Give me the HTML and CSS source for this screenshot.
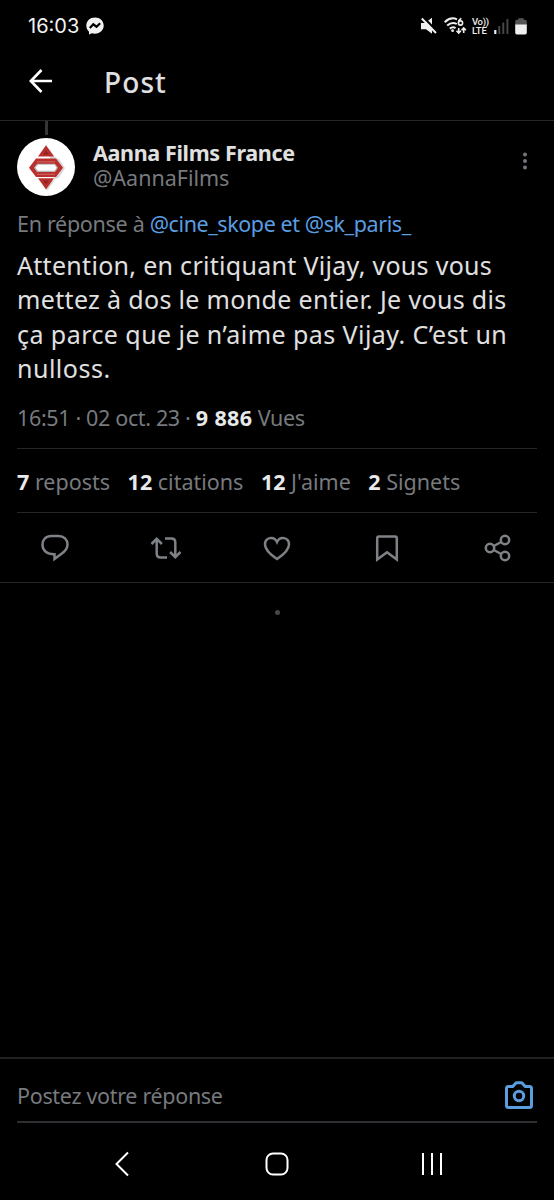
FILE: index.html
```html
<!DOCTYPE html>
<html lang="fr">
<head>
<meta charset="utf-8">
<title>Post</title>
<link rel="stylesheet" href="styles.css">
</head>
<body>
<div class="screen">
  <header class="status">
    <span class="clock">16:03</span>
    <svg class="messenger" viewBox="0 0 18 18"><path d="M9 .5C4 .5.3 4 .3 8.600c0 2.500 1 4.600 2.700 6.100L3 17.600l2.800-1.400c1 .3 2 .5 3.200.5 5 0 8.700-3.500 8.700-8.100S14 .5 9 .5z" fill="#f2f2f2"/><path d="M3.800 11l3.500-3.700 3.200 2.400 3.700-3.500" fill="none" stroke="#000" stroke-width="2.200"/></svg>
    <div class="status-icons">
      <svg width="16" height="18" viewBox="0 0 16 18"><path d="M0 6h4L11 .7v16L5 12.200H0z" fill="#eee"/><path d="M1.500 -.5l15 15.500" stroke="#000" stroke-width="2.500"/><path d="M.8 1.500L15 16" stroke="#eee" stroke-width="2"/></svg>
      <svg class="wifi" width="23" height="18" viewBox="0 0 23 18"><g fill="none" stroke="#eee" stroke-width="2"><path d="M.7 5.200Q6.500-.6 13 2.300M3.200 8.600Q8 4.200 12.800 7M5.800 11.600Q9 9 11.500 11.200"/><path d="M14.700 11v5M12.500 13.700l2.200 2.300 2.200-2.300M19.700 16v-5M17.500 13.300l2.200-2.300 2.200 2.300" stroke-width="1.600"/><circle cx="16.500" cy="6" r="2.100" stroke-width="1.600"/><path d="M14.600 5.400Q14.900 2.600 17.300 1.200" stroke-width="1.600"/></g><circle cx="8.600" cy="13.700" r="1.400" fill="#eee"/></svg>
      <span class="volte"><span>Vo))</span><span class="lte">LTE</span></span>
      <svg class="signal" width="15" height="16" viewBox="0 0 15 16"><path d="M1.300 12v4" stroke="#eee" stroke-width="2.200"/><path d="M5.300 8v8M9.300 4.500V16M13.400 1v15" stroke="#484848" stroke-width="1.900"/></svg>
      <svg width="12" height="17" viewBox="0 0 12 17"><path d="M3.200 1.800V.8q0-.6.600-.6h4.400q.6 0 .6.600v1H10q1.800 0 1.800 1.700V7H.2V3.500q0-1.700 1.800-1.700z" fill="#555"/><path d="M.2 6.500h11.600v8.300q0 1.700-1.700 1.700H1.900q-1.700 0-1.700-1.700z" fill="#f0f0f0"/></svg>
    </div>
  </header>
  <div class="appbar">
    <svg class="back" width="24" height="24" viewBox="0 0 24 24"><path d="M23 12H2M12.500 1L1.800 12l10.700 11" fill="none" stroke="#fff" stroke-width="2.700"/></svg>
    <h1 class="title">Post</h1>
  </div>
  <main class="post">
    <div class="thread"></div>
    <div class="author">
      <svg class="avatar" viewBox="0 0 58 58"><circle cx="29" cy="29" r="29" fill="#fff"/><path d="M30.500 9l8 10.500 3.500 1.500 6 9-6 9.500-3.500 1.500-8 11.500-7-10h14z" fill="#d8d8d8"/><path d="M29 7.300l8 11.200H21zM29 51.500l8-11.200H21z" fill="#b92f2d"/><path d="M29 12.500l3 4h-6zM29 46.500l3-4h-6z" fill="#8f2422"/><path d="M19 20.500h20L46 29.700l-7 9.200H19l-7-9.200z" fill="#b92f2d"/><path d="M20 23.800h18M20 36.300h18" stroke="#cf6a66" stroke-width="1"/><path d="M20 25.700h18l3 4-3 4.200H20l-3-4.200z" fill="#b8b8b8"/><path d="M21 26.700h16.500l2 3-2 3H21l-2.500-3z" fill="#fff"/></svg>
      <div class="names"><span class="name">Aanna Films France</span><span class="handle">@AannaFilms</span></div>
      <svg class="more" width="6" height="18" viewBox="0 0 6 18" fill="#71767b"><circle cx="3" cy="2.500" r="2"/><circle cx="3" cy="9" r="2"/><circle cx="3" cy="15.500" r="2"/></svg>
    </div>
    <p class="context">En réponse à <span>@cine_skope et @sk_paris_</span></p>
    <p class="body"><span class="l1">Attention, en critiquant Vijay, vous vous</span><span class="l2">mettez à dos le monde entier. Je vous dis</span><span class="l3">ça parce que je n’aime pas Vijay. C’est un</span><span class="l4">nulloss.</span></p>
    <p class="meta">16:51 · 02 oct. 23 · <b>9 886</b> Vues</p>
    <div class="stats"><span><b>7</b> reposts</span><span><b>12</b> citations</span><span><b>12</b> J'aime</span><span><b>2</b> Signets</span></div>
    <div class="actions">
      <svg viewBox="0 0 32 32"><path d="M12.500 4h7C25 4 28.500 7.600 28.500 12.500c0 4-2 6.600-6 9.200L15.500 27v-4.800C8 22.400 3.500 18.400 3.500 13S7 4 12.500 4z"/></svg>
      <svg viewBox="0 0 32 32"><path d="M1.500 12l5.200-5.200 5.200 5.200M6.700 7v14.500q0 4 4 4H17M15 6.500h6.300q4 0 4 4V25M20.100 20l5.200 5.200 5.200-5.200"/></svg>
      <svg viewBox="0 0 32 32"><path d="M16 27C9 22.200 4 17.800 4 12.400 4 5.400 13 3.500 16 10c3-6.500 12-4.600 12 2.400C28 17.800 23 22.200 16 27z"/></svg>
      <svg viewBox="0 0 32 32"><path d="M6.200 27.500V6.200q0-1.700 1.700-1.700h16.200q1.700 0 1.700 1.700v21.300L16 20.300z"/></svg>
      <svg viewBox="0 0 32 32"><circle cx="8" cy="16" r="4.200"/><circle cx="23" cy="8" r="4.200"/><circle cx="23" cy="24" r="4.200"/><path d="M11.700 14l7.600-4M11.700 18l7.600 4"/></svg>
    </div>
  </main>
  <div class="empty"><i class="dot"></i></div>
  <div class="composer">
    <div class="field"><span class="placeholder">Postez votre réponse</span>
    <svg class="camera" width="28" height="28" viewBox="0 0 28 28"><path d="M3.500 5.500h4.200l2.800-3q.5-.7 1.400-.7h4.200q.9 0 1.400.7l2.800 3h4.200q2 0 2 2v17q0 2-2 2h-21q-2 0-2-2v-17q0-2 2-2z"/><circle cx="14" cy="15" r="4.700"/></svg></div>
  </div>
  <nav class="nav">
    <svg width="26" height="26" viewBox="0 0 26 26"><path d="M19 1.500L7.500 13 19 24.500"/></svg>
    <svg width="26" height="26" viewBox="0 0 26 26"><rect x="2.500" y="2.500" width="21" height="21" rx="6.500"/></svg>
    <svg width="26" height="26" viewBox="0 0 26 26"><path d="M4 2v22M13 2v22M22 2v22"/></svg>
  </nav>
</div>
</body>
</html>
```
FILE: styles.css
```css
* { box-sizing: border-box; }
body { margin: 0; background: #000; color: #e0e0e0; font-family: "Noto Sans", sans-serif; }
p, h1 { margin: 0; font-weight: 400; }
svg { display: block; flex: none; }
.screen { width: 554px; height: 1200px; display: flex; flex-direction: column; overflow: hidden; white-space: nowrap; }
.status { height: 52px; display: flex; align-items: center; padding: 0 27px 0 28px; }
.clock { width: 58px; font-family: Inter, sans-serif; font-size: 20px; color: #f2f2f2; }
.messenger { width: 18px; height: 18px; }
.status-icons { margin-left: auto; display: flex; align-items: center; gap: 6px; }
.wifi { margin-left: 1px; }
.volte { display: flex; flex-direction: column; width: 16px; margin-left: -1px; font: 500 9.5px/9px Roboto, sans-serif; letter-spacing: -0.3px; color: #eee; }
.lte { letter-spacing: -0.1px; }
.appbar { height: 69px; display: flex; align-items: center; padding: 0 0 8px 29px; border-bottom: 1px solid #242628; }
.back { margin-top: -2px; }
.title { margin-left: 51px; font-size: 28px; font-weight: 500; line-height: 40px; letter-spacing: 1.1px; }
.post { height: 462px; padding: 0 17px; border-bottom: 1px solid #242628; margin: 0; }
.thread { width: 3px; height: 14px; margin: 0 0 3px 28px; background: #333639; }
.author { display: flex; height: 58px; }
.avatar { width: 58px; height: 58px; }
.names { display: flex; flex-direction: column; margin-left: 18px; padding-top: 2px; font-size: 21.5px; line-height: 25px; }
.name { font-weight: 700; letter-spacing: -0.35px; }
.handle, .context, .meta, .stats, .placeholder { color: #777a7e; }
.more { margin: 14px 9px 0 auto; }
.context { margin-top: 13px; font-size: 21.5px; line-height: 30px; letter-spacing: -0.3px; }
.context span { color: #5a9de0; letter-spacing: -0.42px; }
.body { margin-top: 9px; font-size: 25px; line-height: 34.3px; }
.body span { display: block; width: max-content; }
.l1 { letter-spacing: 0.3px; }
.l2 { letter-spacing: 0.34px; }
.l3 { letter-spacing: 0.44px; }
.l4 { letter-spacing: 0.5px; }
.meta { margin-top: 18px; font-size: 21.5px; line-height: 30px; letter-spacing: -0.35px; }
.meta b { letter-spacing: 0.4px; }
b { color: #e7e9ea; }
.stats { display: flex; gap: 17.5px; height: 65px; margin-top: 15px; border-top: 1px solid #242628; border-bottom: 1px solid #242628; font-size: 21.5px; line-height: 65px; }
.actions { display: flex; justify-content: space-between; padding: 19px 23px 0 22px; }
.actions svg { width: 32px; height: 32px; fill: none; stroke: #7e8287; stroke-width: 2.5; }
.empty { flex: 1; display: flex; justify-content: center; padding-top: 27px; }
.dot { width: 5px; height: 5px; border-radius: 50%; background: #44474a; }
.composer { height: 66px; padding: 0 17px; border-top: 2px solid #202224; }
.field { height: 64px; display: flex; align-items: center; justify-content: space-between; padding: 10px 4px 0 0; border-bottom: 2px solid #2d2f32; }
.placeholder { font-size: 21.5px; letter-spacing: -0.32px; }
.camera { fill: none; stroke: #5a9de0; stroke-width: 3; }
.nav { height: 77px; display: flex; justify-content: space-between; padding: 28px 109px 0; }
.nav svg { fill: none; stroke: #fff; stroke-width: 2; }
```
